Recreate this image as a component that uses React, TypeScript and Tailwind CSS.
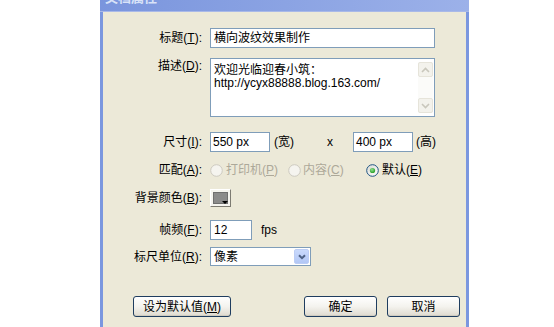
import React from "react";

const Radio = ({ checked, disabled }: { checked?: boolean; disabled?: boolean }) => (
  <svg width="13" height="13" viewBox="0 0 13 13" className="shrink-0">
    <defs>
      <radialGradient id="rg" cx="0.35" cy="0.35" r="0.8">
        <stop offset="0" stopColor="#dcdcd4" />
        <stop offset="1" stopColor="#ffffff" />
      </radialGradient>
      <radialGradient id="dot" cx="0.4" cy="0.35" r="0.7">
        <stop offset="0" stopColor="#8fe08f" />
        <stop offset="1" stopColor="#1f9a1f" />
      </radialGradient>
    </defs>
    {disabled ? (
      <circle cx="6.5" cy="6.5" r="5.8" fill="#f5f4ef" stroke="#cdcac0" strokeWidth="1" />
    ) : (
      <circle cx="6.5" cy="6.5" r="5.8" fill="url(#rg)" stroke="#1c5180" strokeWidth="1" />
    )}
    {checked && <circle cx="6.5" cy="6.5" r="2.6" fill="url(#dot)" />}
  </svg>
);

const Label = ({ children, top }: { children: React.ReactNode; top?: boolean }) => (
  <div className={top ? "w-[99px] shrink-0 text-right self-start mt-[2px]" : "w-[99px] shrink-0 text-right"}>
    {children}
  </div>
);

const ScrollBtn = ({ up }: { up?: boolean }) => (
  <div className="w-[15px] h-[15px] border border-[#e6e4da] rounded-[2px] bg-[#f3f2ec] flex items-center justify-center">
    <svg width="9" height="6" viewBox="0 0 9 6">
      <path d={up ? "M1 5 L4.5 1.5 L8 5" : "M1 1 L4.5 4.5 L8 1"} fill="none" stroke="#c9c7bc" strokeWidth="1.6" />
    </svg>
  </div>
);

const XpButton = ({ children, w }: { children: React.ReactNode; w: string }) => (
  <div
    className={
      w +
      " h-[21px] rounded-[3px] border border-[#1f3d5f] bg-gradient-to-b from-[#ffffff] via-[#f4f3ee] to-[#dedacf] flex items-center justify-center text-[12px] text-black shadow-[inset_0_-1px_0_#d0ccc0]"
    }
  >
    {children}
  </div>
);

export default function App() {
  return (
    <div className="w-[554px] h-[327px] bg-white overflow-hidden font-['Liberation_Sans','Noto_Sans_CJK_SC',sans-serif] text-[12px] text-black leading-none">
      <div className="ml-[100px] w-[369px] h-[327px] flex flex-col bg-[#7b97df]">
        <div className="h-[11px] shrink-0 overflow-hidden bg-gradient-to-r from-[#7a95dd] to-[#9cb1e9]">
          <div className="-mt-[9px] pl-[5px] text-[13px] leading-[13px] font-bold text-[#d9e3f8]">文档属性</div>
        </div>
        <div className="h-[1px] shrink-0 bg-[#a9b9e8]" />
        <div className="mx-[3px] flex-1 bg-[#ece9d8] flex flex-col">
          {/* 标题 */}
          <div className="mt-[16px] flex items-center gap-[8px] h-[20px]">
            <Label>
              标题(<u>T</u>):
            </Label>
            <div className="w-[225px] h-[20px] border border-[#7f9db9] bg-white flex items-center px-[3px]">
              横向波纹效果制作
            </div>
          </div>
          {/* 描述 */}
          <div className="mt-[10px] flex gap-[8px] h-[59px]">
            <Label top>
              描述(<u>D</u>):
            </Label>
            <div className="w-[225px] h-[59px] border border-[#7f9db9] bg-white flex">
              <div className="flex-1 pl-[3px] pt-[5px] leading-[13px]">
                <div>欢迎光临迎春小筑：</div>
                <div>http://ycyx88888.blog.163.com/</div>
              </div>
              <div className="w-[15px] mr-[1px] mt-[3px] mb-[3px] flex flex-col justify-between bg-[#fbfbf9]">
                <ScrollBtn up />
                <ScrollBtn />
              </div>
            </div>
          </div>
          {/* 尺寸 */}
          <div className="mt-[15px] flex items-center gap-[8px] h-[20px]">
            <Label>
              尺寸(<u>I</u>):
            </Label>
            <div className="flex items-center">
              <div className="w-[60px] h-[20px] border border-[#7f9db9] bg-white flex items-center px-[2px]">550 px</div>
              <div className="w-[56px] pl-[4px]">(宽)</div>
              <div className="w-[27px] pl-[1px]">x</div>
              <div className="w-[60px] h-[20px] border border-[#7f9db9] bg-white flex items-center px-[2px]">400 px</div>
              <div className="pl-[3px]">(高)</div>
            </div>
          </div>
          {/* 匹配 */}
          <div className="mt-[10px] flex items-center gap-[8px] h-[16px]">
            <Label>
              匹配(<u>A</u>):
            </Label>
            <div className="flex items-center">
              <div className="w-[78px] flex items-center gap-[3px] text-[#aca899]">
                <Radio disabled />
                <span>
                  打印机(<u>P</u>)
                </span>
              </div>
              <div className="w-[78px] flex items-center gap-[2px] text-[#aca899]">
                <Radio disabled />
                <span>
                  内容(<u>C</u>)
                </span>
              </div>
              <div className="flex items-center gap-[3px]">
                <Radio checked />
                <span>
                  默认(<u>E</u>)
                </span>
              </div>
            </div>
          </div>
          {/* 背景颜色 */}
          <div className="mt-[11px] flex items-center gap-[8px] h-[18px]">
            <Label>
              背景颜色(<u>B</u>):
            </Label>
            <div className="relative w-[21px] h-[18px] border border-[#ffffff] border-r-[#7d7b72] border-b-[#7d7b72] bg-[#f5f4ef] p-[2px]">
              <div className="w-full h-full bg-[#8b8b8b] border border-[#6f6f6f]" />
              <svg className="absolute right-[2px] bottom-[1px]" width="6" height="4" viewBox="0 0 6 4">
                <path d="M0 0 H6 L3 3 Z" fill="#000" />
              </svg>
            </div>
          </div>
          {/* 帧频 */}
          <div className="mt-[13px] flex items-center gap-[8px] h-[20px]">
            <Label>
              帧频(<u>F</u>):
            </Label>
            <div className="w-[42px] h-[20px] border border-[#7f9db9] bg-white flex items-center px-[3px]">12</div>
            <div className="ml-[1px]">fps</div>
          </div>
          {/* 标尺单位 */}
          <div className="mt-[7px] flex items-center gap-[8px] h-[19px]">
            <Label>
              标尺单位(<u>R</u>):
            </Label>
            <div className="w-[101px] h-[19px] border border-[#7f9db9] bg-white flex items-center">
              <div className="flex-1 pl-[3px]">像素</div>
              <div className="w-[15px] h-[15px] mr-[1px] rounded-[2px] border border-[#bccdf5] bg-gradient-to-b from-[#c9d9fc] to-[#b2c7f5] flex items-center justify-center">
                <svg width="8" height="6" viewBox="0 0 8 6">
                  <path d="M1 1.2 L4 4.2 L7 1.2" fill="none" stroke="#4d6185" strokeWidth="2" />
                </svg>
              </div>
            </div>
          </div>
          {/* buttons */}
          <div className="mt-[30px] flex items-center pl-[30px] pr-[6px]">
            <XpButton w="w-[98px]">
              设为默认值(<u>M</u>)
            </XpButton>
            <div className="flex-1" />
            <XpButton w="w-[73px]">确定</XpButton>
            <div className="w-[10px]" />
            <XpButton w="w-[73px]">取消</XpButton>
          </div>
        </div>
      </div>
    </div>
  );
}
